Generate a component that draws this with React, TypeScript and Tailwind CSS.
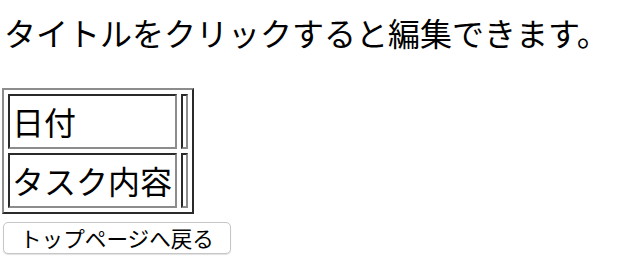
import React from "react";

export default function App() {
  const jp = { fontFamily: '"Noto Sans CJK JP", "Noto Sans", sans-serif' };
  return (
    <div className="min-h-screen bg-white pt-2 pl-[2px] text-black" style={jp}>
      <p className="ml-[2px] text-[32px] leading-[48px] whitespace-nowrap">
        タイトルをクリックすると編集できます。
      </p>

      <table className="mt-8 border-separate border-spacing-[4px] border-2 border-t-[#8c8c8c] border-l-[#8c8c8c] border-r-[#2a2a2a] border-b-[#2a2a2a]">
        <tbody>
          {["日付", "タスク内容"].map((label) => (
            <tr key={label}>
              <td className="border-2 border-t-[#2a2a2a] border-l-[#2a2a2a] border-r-[#8c8c8c] border-b-[#8c8c8c] py-px pl-[2px] pr-[3px] text-left text-[32px] leading-[49px] font-normal whitespace-nowrap">
                {label}
              </td>
              <td className="border-2 border-t-[#2a2a2a] border-l-[#2a2a2a] border-r-[#8c8c8c] border-b-[#8c8c8c] p-0">
                <div className="w-[3px]" />
              </td>
            </tr>
          ))}
        </tbody>
      </table>

      <div className="mt-2">
        <button
          type="button"
          className="ml-px h-8 rounded-[5px] border border-[#c6c6c6] bg-white px-[16px] text-[21.6px] leading-[30px] shadow-[0_1px_1px_rgba(0,0,0,0.12)] whitespace-nowrap"
        >
          トップページへ戻る
        </button>
      </div>
    </div>
  );
}
